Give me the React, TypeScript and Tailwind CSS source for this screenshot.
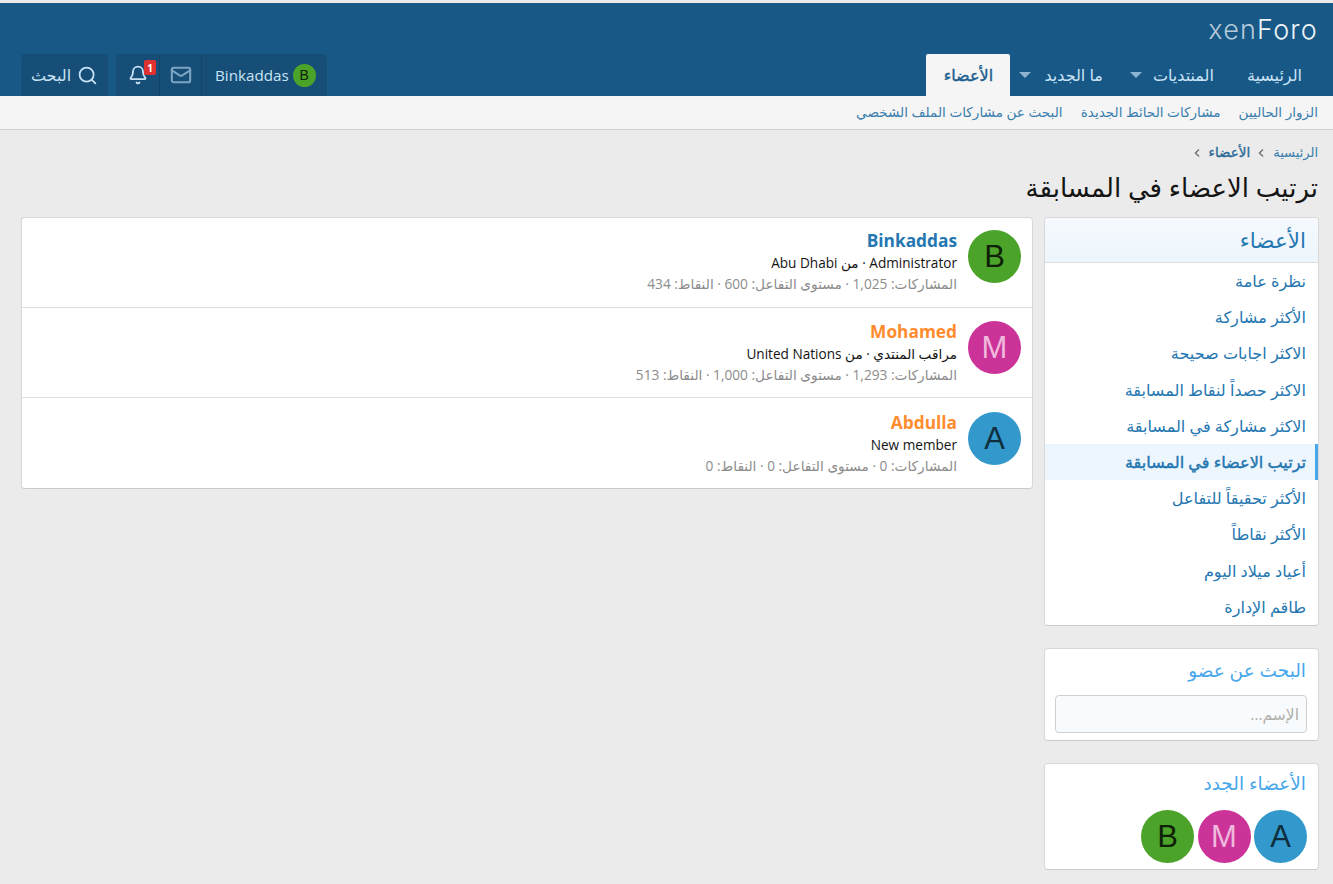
import React from "react";
import { Search, Bell, Mail } from "lucide-react";

const FONT = "font-['Open_Sans','DejaVu_Sans',sans-serif]";

function Avatar({ letter, size }: { letter: "A" | "B" | "M"; size: "s" | "m" }) {
  const colors = { B: "bg-[#4ba329] text-[#0f2108]", M: "bg-[#cc3399] text-[#efb8dd]", A: "bg-[#3399cc] text-[#0f2e3d]" }[letter];
  const sizing = { s: "w-[23px] h-[23px] text-[14px]", m: "w-[53px] h-[53px] text-[31px]" }[size];
  return (
    <span className={`flex shrink-0 items-center justify-center rounded-full font-['Liberation_Sans',sans-serif] leading-none ${colors} ${sizing}`}>
      {letter}
    </span>
  );
}

function Member({ letter, name, nameClass, line, stats, rowClass }: { letter: "A" | "B" | "M"; name: string; nameClass: string; line: string; stats: string; rowClass: string }) {
  return (
    <div className={`flex h-[90px] items-start gap-[11px] pr-[11px] pl-[11px] ${rowClass}`}>
      <Avatar letter={letter} size="m" />
      <div className="min-w-0">
        <div dir="ltr" className={`text-right text-[17.3px] font-bold leading-[21px] ${nameClass}`}>{name}</div>
        <div className="mt-[2px] text-[13.6px] leading-[20px] text-[#141414]">{line}</div>
        <div className="text-[13.7px] leading-[21px] text-[#8c8c8c]">{stats}</div>
      </div>
    </div>
  );
}

const NAV = ["نظرة عامة", "الأكثر مشاركة", "الاكثر اجابات صحيحة", "الاكثر حصداً لنقاط المسابقة", "الاكثر مشاركة في المسابقة", "ترتيب الاعضاء في المسابقة", "الأكثر تحقيقاً للتفاعل", "الأكثر نقاطاً", "أعياد ميلاد اليوم", "طاقم الإدارة"];

function Caret() {
  return <span className="h-0 w-0 border-x-[6px] border-t-[6px] border-x-transparent border-t-[#8fb4d0]" />;
}

function Crumb() {
  return (
    <svg width="7" height="10" viewBox="0 0 7 10" fill="none" stroke="#7a7a7a" strokeWidth="1.6" className="shrink-0">
      <path d="M5 1.5 1.5 5 5 8.5" />
    </svg>
  );
}

export default function App() {
  return (
    <div dir="rtl" className={`min-h-[884px] overflow-hidden bg-[#ebebeb] pt-[3px] ${FONT}`}>
      <header className="bg-[#185886]">
        <div className="flex h-[51px] items-start pr-[15px] pl-[21px] pt-[11px]">
          <span dir="ltr" className="font-['Inter',sans-serif] text-[27px] font-light leading-[32px] tracking-[1.2px]">
            <span className="text-[#b4c9d9]">xen</span>
            <span className="text-[#eef3f7]">Foro</span>
          </span>
        </div>
        <div className="flex h-[42px] items-end justify-between pr-[15px] pl-[21px]">
          <nav className="flex items-stretch text-[16px] text-[#c9e3f6]">
            <span className="flex h-[42px] items-center pr-[16px] pl-[33px]">الرئيسية</span>
            <span className="flex h-[42px] items-center gap-[11px] pl-[27px]">المنتديات <Caret /></span>
            <span className="flex h-[42px] items-center gap-[13px] pl-[9px]">ما الجديد <Caret /></span>
            <span className="flex h-[42px] w-[84px] items-center justify-center rounded-t-[2px] bg-[#f5f5f5] text-[#1d5f8f] [-webkit-text-stroke:0.4px]">الأعضاء</span>
          </nav>
          <div className="flex gap-[8px] text-[15.2px] text-[#c9e3f6]">
            <div className="flex h-[42px] rounded-t-[4px] bg-[#164e77]">
              <span dir="ltr" className="flex items-center gap-[4px] pr-[11px] pl-[13px]">
                <span>Binkaddas</span>
                <Avatar letter="B" size="s" />
              </span>
              <span className="flex w-[42px] items-center justify-center border-r border-[#134568] text-[#7ea6c4]">
                <Mail size={22} strokeWidth={2.2} />
              </span>
              <span className="relative flex w-[44px] items-center justify-center border-r border-[#134568]">
                <Bell size={20} strokeWidth={2.2} />
                <span className="absolute left-[28px] top-[6px] flex h-[15px] w-[12px] items-center justify-center rounded-[2px] bg-[#e03030] text-[10px] font-bold leading-none text-white">1</span>
              </span>
            </div>
            <span className="flex h-[42px] w-[87px] items-center justify-center gap-[6px] rounded-t-[4px] bg-[#164e77] text-[16px]">
              <Search size={21} strokeWidth={2} />
              <span>البحث</span>
            </span>
          </div>
        </div>
      </header>

      <div className="flex h-[34px] items-center gap-[18px] border-b border-[#cfcfcf] bg-[#f5f5f5] pr-[15px] text-[13.6px] text-[#3b7fae]">
        <span>الزوار الحاليين</span>
        <span>مشاركات الحائط الجديدة</span>
        <span>البحث عن مشاركات الملف الشخصي</span>
      </div>

      <div className="pr-[15px] pl-[21px]">
        <div className="flex h-[43px] items-center gap-[8px] pt-[2px] text-[13px] text-[#3b7fae]">
          <span>الرئيسية</span>
          <Crumb />
          <span className="text-[13.5px] text-[#2a6a97] [-webkit-text-stroke:0.35px]">الأعضاء</span>
          <Crumb />
        </div>
        <h1 className="text-[26px] font-normal leading-[28px] text-[#141414]">ترتيب الاعضاء في المسابقة</h1>

        <div className="-mr-px mt-[16px] flex items-start gap-[11px]">
          <aside className="flex w-[275px] shrink-0 flex-col gap-[22px]">
            <section className="overflow-hidden rounded-[4px] border border-[#d8d8d8] border-b-[#cbcbcb] bg-white">
              <h3 className="flex h-[45px] items-center border-b border-[#dfdfdf] bg-gradient-to-b from-[#f5f9fd] to-[#edf6fd] pr-[12px] pl-[11px] text-[21.5px] font-normal text-[#2577b1]">الأعضاء</h3>
              <div className="flex flex-col">
                {NAV.map((n, i) => (
                  <a key={n} className={`flex h-[36.2px] items-center pl-[11px] text-[16.1px] text-[#2577b1] ${i === 5 ? "border-r-[3px] border-[#47a7eb] bg-[#edf6fd] pr-[9px] [-webkit-text-stroke:0.45px]" : "pr-[12px]"}`}>{n}</a>
                ))}
              </div>
            </section>
            <section className="h-[93px] rounded-[4px] border border-[#d8d8d8] border-b-[#cbcbcb] bg-white pr-[11px] pl-[10px]">
              <h3 className="pt-[9px] pr-[1px] text-[18.5px] font-normal leading-[24px] text-[#47a7eb]">البحث عن عضو</h3>
              <input readOnly placeholder="الإسم..." className="mt-[13px] h-[38px] w-full rounded-[4px] border border-[#cfcfcf] bg-[#f8fbfe] px-[7px] text-[15.5px] outline-none placeholder:text-[#b0b0a8]" />
            </section>
            <section className="h-[107px] rounded-[4px] border border-[#d8d8d8] border-b-[#cbcbcb] bg-white pr-[11px] pl-[10px]">
              <h3 className="pt-[7px] pr-[1px] text-[18.5px] font-normal leading-[24px] text-[#47a7eb]">الأعضاء الجدد</h3>
              <div className="mt-[15px] flex gap-[3.5px]">
                <Avatar letter="A" size="m" />
                <Avatar letter="M" size="m" />
                <Avatar letter="B" size="m" />
              </div>
            </section>
          </aside>

          <main className="min-w-0 flex-1 rounded-[4px] border border-[#d8d8d8] border-b-[#cbcbcb] bg-white">
            <Member rowClass="border-b border-[#dfdfdf] pt-[12px]" letter="B" name="Binkaddas" nameClass="text-[#2577b1]" line="Administrator · من Abu Dhabi" stats="المشاركات: 1,025 · مستوى التفاعل: 600 · النقاط: 434" />
            <Member rowClass="border-b border-[#dfdfdf] pt-[13px]" letter="M" name="Mohamed" nameClass="text-[#ff8c2e]" line="مراقب المنتدي · من United Nations" stats="المشاركات: 1,293 · مستوى التفاعل: 1,000 · النقاط: 513" />
            <Member rowClass="pt-[14px]" letter="A" name="Abdulla" nameClass="text-[#ff8c2e]" line="New member" stats="المشاركات: 0 · مستوى التفاعل: 0 · النقاط: 0" />
          </main>
        </div>
      </div>
    </div>
  );
}
